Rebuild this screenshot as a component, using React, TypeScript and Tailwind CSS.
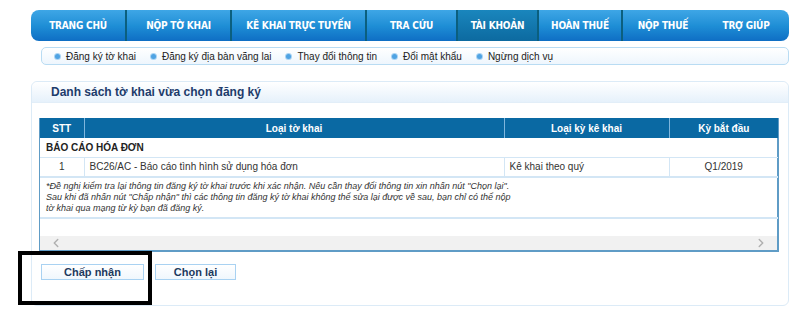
import { ChevronLeft, ChevronRight } from 'lucide-react'

const tabs = [
  { label: 'TRANG CHỦ', w: 96 },
  { label: 'NỘP TỜ KHAI', w: 105 },
  { label: 'KÊ KHAI TRỰC TUYẾN', w: 135 },
  { label: 'TRA CỨU', w: 91 },
  { label: 'TÀI KHOẢN', w: 81, active: true },
  { label: 'HOÀN THUẾ', w: 84 },
  { label: 'NỘP THUẾ', w: 80, noSep: true },
  { label: 'TRỢ GIÚP', w: 86, last: true },
]

const subLinks = ['Đăng ký tờ khai', 'Đăng ký địa bàn vãng lai', 'Thay đổi thông tin', 'Đổi mật khẩu', 'Ngừng dịch vụ']

export default function App() {
  return (
    <div className="w-[800px] h-[313px] bg-white overflow-hidden relative" style={{ fontFamily: '"Liberation Sans", Arial, sans-serif' }}>
      {/* top menu */}
      <div className="ml-[31px] mt-[10px] w-[758px] h-[31px] rounded-[8px] flex overflow-hidden bg-gradient-to-b from-[#3ea6e6] via-[#1f8fd6] to-[#0f6ec4]" style={{ fontFamily: '"DejaVu Sans Condensed", "DejaVu Sans", sans-serif' }}>
        {tabs.map((t, i) => (
          <div
            key={i}
            className={`h-full flex items-center justify-center text-white font-bold text-[10px] tracking-[-0.2px] ${t.active ? 'bg-gradient-to-b from-[#1a86bd] to-[#0c6aa0]' : ''} ${t.last || t.noSep ? '' : 'border-r-2 border-[#0b5f7e]'}`}
            style={{ width: t.w }}
          >
            {t.label}
          </div>
        ))}
      </div>

      {/* sub menu */}
      <div className="ml-[41px] mt-[6px] w-[748px] h-[18px] rounded-[5px] border border-[#b9dcf3] bg-gradient-to-b from-white to-[#eef6fd] flex items-center pl-[13px] gap-[15px] text-[10px] text-[#222]">
        {subLinks.map(s => (
          <div key={s} className="flex items-center gap-[6px]">
            <span className="w-[5px] h-[5px] rounded-full bg-[#4fa3e3] ring-1 ring-[#a9d3f3]" />
            <span>{s}</span>
          </div>
        ))}
      </div>

      {/* panel */}
      <div className="ml-[31px] mt-[16px] w-[758px] h-[225px] rounded-[6px] border border-[#dcebf7] bg-white">
        <div className="h-[21px] rounded-t-[6px] bg-gradient-to-b from-white to-[#e6f1fb] border-b border-[#e2eef8] flex items-center pl-[19px]">
          <span className="text-[12px] font-bold text-[#1e3c6b]">Danh sách tờ khai vừa chọn đăng ký</span>
        </div>

        <div className="ml-[7px] mt-[15px] w-[740px] border-r-2 border-b-2 border-l border-[#5f9cc6]">
          <table className="w-[738px] border-collapse text-[10px] text-[#333]">
            <thead>
              <tr className="bg-[#0a69a3] text-white font-bold h-[20px]">
                <th className="w-[44px] border-r border-[#7fb6dd] font-bold">STT</th>
                <th className="w-[420px] border-r border-[#7fb6dd] font-bold">Loại tờ khai</th>
                <th className="w-[165px] border-r border-[#7fb6dd] font-bold">Loại kỳ kê khai</th>
                <th className="font-bold">Kỳ bắt đầu</th>
              </tr>
            </thead>
            <tbody>
              <tr className="h-[19px] border-b border-[#d3e6f5]">
                <td colSpan={4} className="pl-[6px] font-bold text-[#222]">BÁO CÁO HÓA ĐƠN</td>
              </tr>
              <tr className="h-[20px] border-b-2 border-[#d3e6f5]">
                <td className="text-center border-r border-[#d3e6f5]">1</td>
                <td className="pl-[5px] border-r border-[#d3e6f5]">BC26/AC - Báo cáo tình hình sử dụng hóa đơn</td>
                <td className="pl-[5px] border-r border-[#d3e6f5]">Kê khai theo quý</td>
                <td className="text-center">Q1/2019</td>
              </tr>
              <tr className="h-[41px] border-b-2 border-[#d3e6f5]">
                <td colSpan={4} className="pl-[6px] italic text-[9px] leading-[11px] text-[#333] align-middle">
                  *Đề nghị kiểm tra lại thông tin đăng ký tờ khai trước khi xác nhận. Nếu cần thay đổi thông tin xin nhấn nút "Chọn lại".<br />
                  Sau khi đã nhấn nút "Chấp nhận" thì các thông tin đăng ký tờ khai không thể sửa lại được về sau, bạn chỉ có thể nộp<br />
                  tờ khai qua mạng từ kỳ bạn đã đăng ký.
                </td>
              </tr>
            </tbody>
          </table>
          <div className="h-[17px]" />
          <div className="h-[14px] bg-[#f1f1f1] flex items-center justify-between px-[9px] text-[#b0b0b0]">
            <ChevronLeft size={14} strokeWidth={2.5} />
            <ChevronRight size={14} strokeWidth={2.5} />
          </div>
        </div>

        <div className="flex gap-[11px] ml-[9px] mt-[12px]">
          <button className="w-[103px] h-[16px] border border-[#a9d2f2] bg-gradient-to-b from-white to-[#f0f7fd] text-[11px] font-bold text-[#1e3a5e] leading-none">Chấp nhận</button>
          <button className="w-[81px] h-[16px] border border-[#a9d2f2] bg-gradient-to-b from-white to-[#f0f7fd] text-[11px] font-bold text-[#1e3a5e] leading-none">Chọn lại</button>
        </div>
      </div>

      {/* highlight box */}
      <div className="absolute left-[18px] top-[251px] w-[134px] h-[54px] border-[4px] border-black" />
    </div>
  )
}
